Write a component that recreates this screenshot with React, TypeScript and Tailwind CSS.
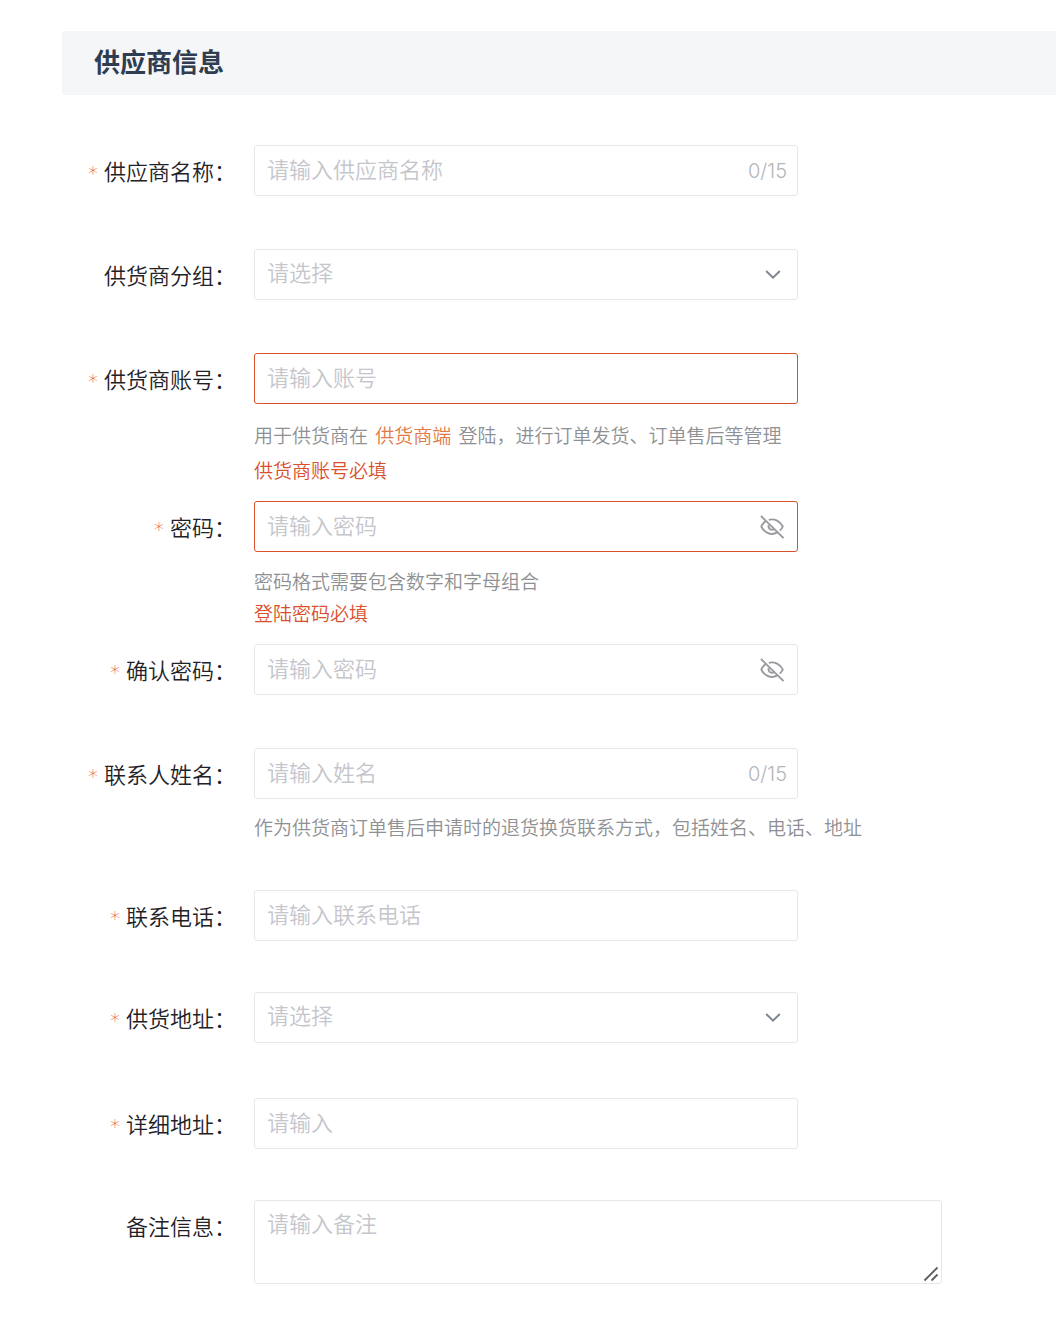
import type { ReactNode } from "react";

const box = "flex h-[51px] w-[544px] items-center rounded-[3px] border bg-white";
const control =
  "h-full w-full min-w-0 flex-1 bg-transparent pb-[6px] pl-3 text-[22px] font-[350] outline-none placeholder:text-[#c5c6cc]";

type FieldProps = {
  id: string;
  label: string;
  required?: boolean;
  className?: string;
  children: ReactNode;
};

function Field({ id, label, required, className = "mb-[53px]", children }: FieldProps) {
  return (
    <div className={`flex items-start ${className}`}>
      <label
        htmlFor={id}
        className="flex w-[236px] shrink-0 items-center justify-end gap-[6px] text-[22px] leading-[50px] font-[350] text-[#1f2227]"
      >
        {required && (
          <span className="pt-[6px] font-['DejaVu_Sans'] text-[20px] leading-[44px] font-extralight text-[#e8502c]">*</span>
        )}
        <span>{label}：</span>
      </label>
      <div className="ml-[18px] min-w-0 flex-1">{children}</div>
    </div>
  );
}

function Chevron() {
  return (
    <svg className="pointer-events-none absolute right-4 h-4 w-4" viewBox="0 0 16 16" fill="none">
      <path d="M1.2 4L8 10.6L14.8 4" stroke="#7f8592" strokeWidth="2" />
    </svg>
  );
}

function EyeOff() {
  return (
    <svg className="h-6 w-6" viewBox="0 0 24 24" fill="none" stroke="#999b9f" strokeWidth="1.9">
      <path d="M1 1L23.5 23" />
      <path d="M8.8 4.8C14.8 3.2 20.2 6.4 22.8 11.5C22.2 13 21.2 14.4 19.8 15.6" />
      <path d="M5.4 6.2C3.6 7.6 2.2 9.4 1.3 11.5C4.5 18.2 11.5 20.8 17.2 17.4" />
      <path d="M8.6 10.2C8 13.8 11.4 16 14.2 14" />
    </svg>
  );
}

function Password({ id, error }: { id: string; error?: boolean }) {
  return (
    <div className={`${box} ${error ? "border-[#d9502c]" : "border-[#e6e8eb]"}`}>
      <input id={id} type="password" placeholder="请输入密码" className={control} />
      <button type="button" aria-label="显示密码" className="mr-[13px] shrink-0">
        <EyeOff />
      </button>
    </div>
  );
}

function Counter() {
  return <span className="mr-[10px] shrink-0 font-['Inter'] text-[20px] font-light text-[#b5b6b9]">0/15</span>;
}

function App() {
  return (
    <form className="bg-white pt-[31px] pb-[38px] font-['Noto_Sans_CJK_SC',sans-serif]">
      <h2 className="ml-[62px] rounded-l-[3px] bg-[#f5f6f8] pb-1 pl-8 text-[26px] leading-[60px] font-semibold text-[#303d50]">
        供应商信息
      </h2>

      <div className="pt-[50px]">
        <Field id="name" label="供应商名称" required>
          <div className={`${box} border-[#e6e8eb]`}>
            <input id="name" placeholder="请输入供应商名称" maxLength={15} className={control} />
            <Counter />
          </div>
        </Field>

        <Field id="group" label="供货商分组">
          <div className={`${box} relative border-[#e6e8eb]`}>
            <select id="group" className={`${control} appearance-none text-[#c5c6cc]`}>
              <option>请选择</option>
            </select>
            <Chevron />
          </div>
        </Field>

        <Field id="account" label="供货商账号" required className="mb-[14px]">
          <div className={`${box} border-[#d9502c]`}>
            <input id="account" placeholder="请输入账号" className={control} />
          </div>
          <div className="mt-[13px] text-[19px] leading-[35px] font-[350]">
            <p className="text-[#8e9093]">
              用于供货商在 <a href="#" className="mx-[3px] text-[#e07a45]">供货商端</a> 登陆，进行订单发货、订单售后等管理
            </p>
            <p className="text-[#d9502c]">供货商账号必填</p>
          </div>
        </Field>

        <Field id="password" label="密码" required className="mb-[15px]">
          <Password id="password" error />
          <div className="mt-[13px] text-[19px] leading-8 font-[350]">
            <p className="text-[#8e9093]">密码格式需要包含数字和字母组合</p>
            <p className="text-[#d9502c]">登陆密码必填</p>
          </div>
        </Field>

        <Field id="confirm" label="确认密码" required>
          <Password id="confirm" />
        </Field>

        <Field id="contact" label="联系人姓名" required className="mb-[47px]">
          <div className={`${box} border-[#e6e8eb]`}>
            <input id="contact" placeholder="请输入姓名" maxLength={15} className={control} />
            <Counter />
          </div>
          <p className="mt-3 text-[19px] leading-8 font-[350] text-[#8e9093]">
            作为供货商订单售后申请时的退货换货联系方式，包括姓名、电话、地址
          </p>
        </Field>

        <Field id="phone" label="联系电话" required className="mb-[51px]">
          <div className={`${box} border-[#e6e8eb]`}>
            <input id="phone" type="tel" placeholder="请输入联系电话" className={control} />
          </div>
        </Field>

        <Field id="region" label="供货地址" required className="mb-[55px]">
          <div className={`${box} relative border-[#e6e8eb]`}>
            <select id="region" className={`${control} appearance-none text-[#c5c6cc]`}>
              <option>请选择</option>
            </select>
            <Chevron />
          </div>
        </Field>

        <Field id="address" label="详细地址" required className="mb-[51px]">
          <div className={`${box} border-[#e6e8eb]`}>
            <input id="address" placeholder="请输入" className={control} />
          </div>
        </Field>

        <Field id="remark" label="备注信息" className="">
          <div className="relative w-[688px] max-w-full">
            <textarea
              id="remark"
              placeholder="请输入备注"
              className="block h-[84px] w-full resize-none rounded-[3px] border border-[#e6e8eb] px-3 py-[5px] text-[22px] leading-8 font-[350] outline-none placeholder:text-[#c5c6cc]"
            />
            <svg className="pointer-events-none absolute right-[3px] bottom-[2px] h-4 w-4" viewBox="0 0 16 16">
              <path d="M1.5 14.5L14.5 1.5M8.5 14.5L14.5 8.5" stroke="#5c5d5f" strokeWidth="1.8" />
            </svg>
          </div>
        </Field>
      </div>
    </form>
  );
}

export default App;
